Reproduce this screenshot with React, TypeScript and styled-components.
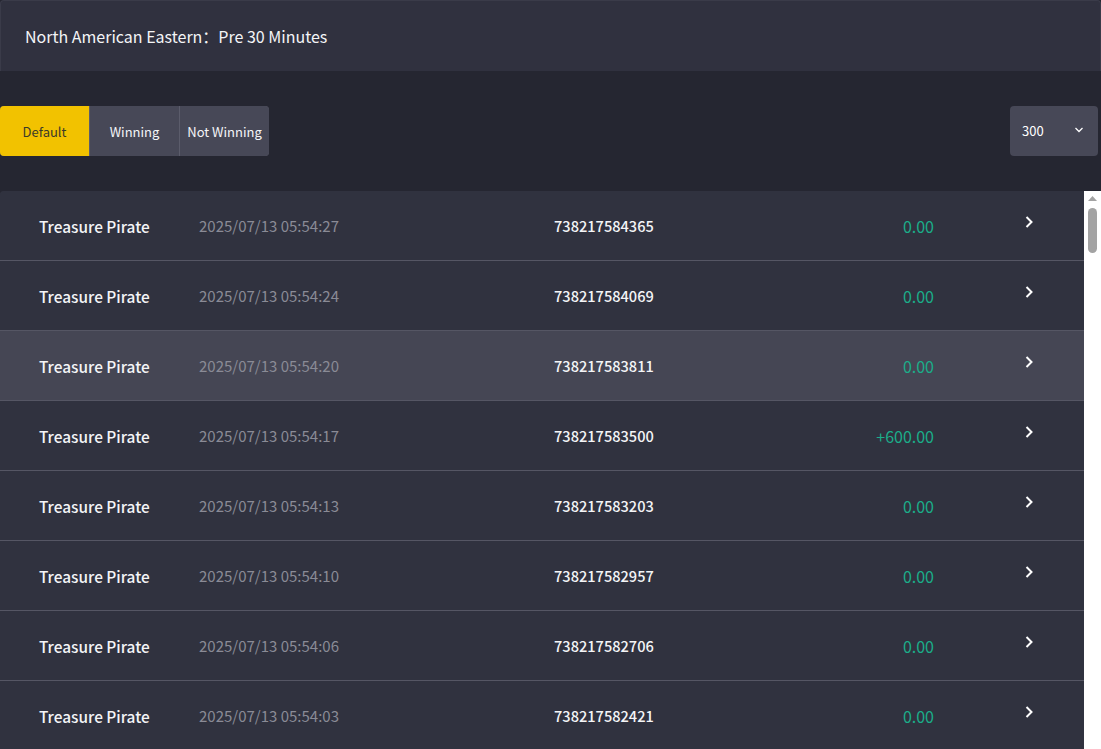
import styled, { createGlobalStyle } from "styled-components";
import { useState } from "react";

const GlobalStyle = createGlobalStyle`
  html, body {
    margin: 0;
    padding: 0;
    background: #252631;
    font-family: "Noto Sans CJK SC", "Noto Sans", sans-serif;
    color: #fff;
    overflow: hidden;
  }
  * { box-sizing: border-box; }
`;

type Bet = {
  game: string;
  time: string;
  id: string;
  amount: string;
};

const bets: Bet[] = [
  { game: "Treasure Pirate", time: "2025/07/13 05:54:27", id: "738217584365", amount: "0.00" },
  { game: "Treasure Pirate", time: "2025/07/13 05:54:24", id: "738217584069", amount: "0.00" },
  { game: "Treasure Pirate", time: "2025/07/13 05:54:20", id: "738217583811", amount: "0.00" },
  { game: "Treasure Pirate", time: "2025/07/13 05:54:17", id: "738217583500", amount: "+600.00" },
  { game: "Treasure Pirate", time: "2025/07/13 05:54:13", id: "738217583203", amount: "0.00" },
  { game: "Treasure Pirate", time: "2025/07/13 05:54:10", id: "738217582957", amount: "0.00" },
  { game: "Treasure Pirate", time: "2025/07/13 05:54:06", id: "738217582706", amount: "0.00" },
  { game: "Treasure Pirate", time: "2025/07/13 05:54:03", id: "738217582421", amount: "0.00" },
];

const filters = ["Default", "Winning", "Not Winning"];

export default function App() {
  const [filter, setFilter] = useState("Default");
  const hovered = 2;

  return (
    <>
      <GlobalStyle />
      <Page>
        <Header>North American Eastern：Pre 30 Minutes</Header>
        <Toolbar>
          <FilterGroup>
            {filters.map((f) => (
              <FilterButton key={f} $active={f === filter} onClick={() => setFilter(f)}>
                {f}
              </FilterButton>
            ))}
          </FilterGroup>
          <PageSize>
            <span>300</span>
            <svg width="10" height="6" viewBox="0 0 10 6">
              <path d="M1.5 1l3.5 3.5L8.5 1" fill="none" stroke="#fff" strokeWidth="1.3" />
            </svg>
          </PageSize>
        </Toolbar>
        <ListWrap>
          <Rows>
            {bets.map((b, i) => (
              <Row key={b.id} $hover={i === hovered}>
                <Game>{b.game}</Game>
                <Time>{b.time}</Time>
                <BetId>{b.id}</BetId>
                <Amount>{b.amount}</Amount>
                <Arrow>
                  <svg width="10" height="14" viewBox="0 0 10 14">
                    <path d="M2.5 2l5 5-5 5" fill="none" stroke="#fff" strokeWidth="2" />
                  </svg>
                </Arrow>
              </Row>
            ))}
          </Rows>
          <ScrollTrack>
            <ScrollButton>
              <svg width="9" height="5" viewBox="0 0 9 5">
                <path d="M0 5h9L4.5 0z" fill="#a3a3a3" />
              </svg>
            </ScrollButton>
            <ScrollThumb />
          </ScrollTrack>
        </ListWrap>
      </Page>
    </>
  );
}

const Page = styled.div`
  width: 1101px;
  height: 749px;
  display: flex;
  flex-direction: column;
`;

const Header = styled.div`
  height: 71px;
  display: flex;
  align-items: center;
  padding-left: 24px;
  background: #30313f;
  border: 1px solid #3a3b49;
  border-bottom: none;
  border-radius: 4px 4px 0 0;
  font-size: 16px;
  font-weight: 400;
  color: #f4f5f7;
`;

const Toolbar = styled.div`
  display: flex;
  justify-content: space-between;
  align-items: center;
  margin: 35px 3px 35px 0;
`;

const FilterGroup = styled.div`
  display: flex;
  gap: 1px;
  border-radius: 4px;
  overflow: hidden;
  background: #5b5c6b;
`;

const FilterButton = styled.button<{ $active: boolean }>`
  height: 50px;
  width: 89px;
  border: none;
  padding: 0;
  font-family: inherit;
  font-size: 13px;
  font-weight: 400;
  background: ${(p) => (p.$active ? "#f2c200" : "#474857")};
  color: ${(p) => (p.$active ? "#3a3a2a" : "#f4f5f7")};
  cursor: pointer;
`;

const PageSize = styled.div`
  width: 88px;
  height: 50px;
  border-radius: 4px;
  background: #474857;
  display: flex;
  align-items: center;
  justify-content: space-between;
  padding: 0 14px 2px 12px;
  font-size: 13px;
  font-weight: 400;
`;

const ListWrap = styled.div`
  flex: 1;
  display: flex;
  min-height: 0;
`;

const Rows = styled.div`
  flex: 1;
  overflow: hidden;
  background: #30323f;
  border-radius: 4px 0 0 0;
`;

const ScrollTrack = styled.div`
  width: 17px;
  background: #ffffff;
  display: flex;
  flex-direction: column;
  align-items: center;
`;

const ScrollButton = styled.div`
  height: 17px;
  width: 100%;
  display: flex;
  align-items: center;
  justify-content: center;
  padding-bottom: 2px;
`;

const ScrollThumb = styled.div`
  width: 9px;
  height: 45px;
  border-radius: 5px;
  background: #a3a3a3;
`;

const Row = styled.div<{ $hover: boolean }>`
  height: 70px;
  display: grid;
  grid-template-columns: 160px 355px 230px 150px 1fr;
  align-items: center;
  padding-left: 39px;
  background: ${(p) => (p.$hover ? "#454654" : "#30323f")};
  border-bottom: 1px solid #555664;
`;

const Game = styled.div`
  font-size: 15.4px;
  font-weight: 500;
  color: #f4f5f7;
`;

const Time = styled.div`
  font-size: 15px;
  color: #8a8b96;
`;

const BetId = styled.div`
  font-size: 14.6px;
  font-weight: 500;
  color: #f4f5f7;
`;

const Amount = styled.div`
  font-size: 16px;
  text-align: right;
  color: #1bae8a;
`;

const Arrow = styled.div`
  padding-left: 90px;
  display: flex;
  margin-top: -8px;
`;
